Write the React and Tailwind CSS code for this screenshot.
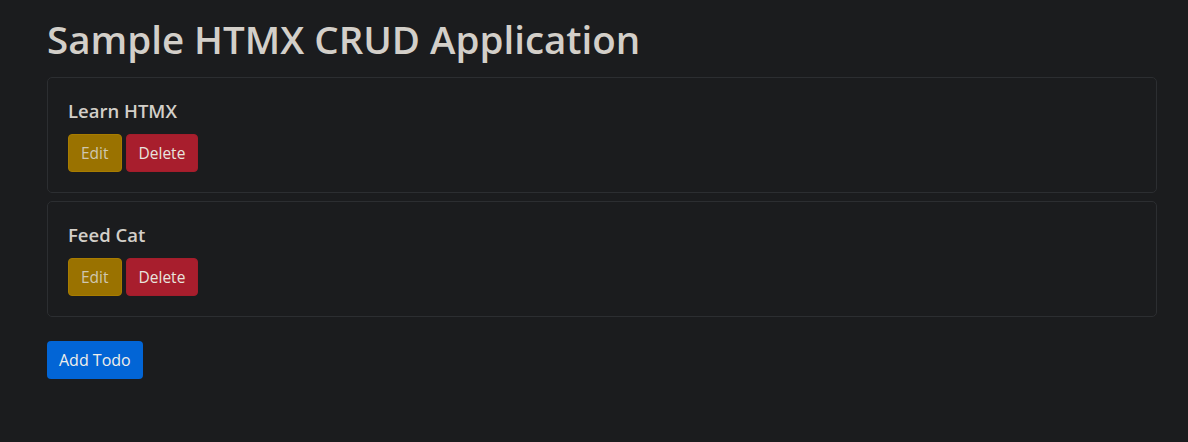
import React from 'react';

const todos = [
  { id: 1, title: 'Learn HTMX' },
  { id: 2, title: 'Feed Cat' },
];

const TodoCard = ({ title }) => (
  <div className="mb-2 rounded-[5px] border border-[#2c2e31] bg-[#1b1c1e] p-5">
    <h5 className="mb-3 pt-[2px] text-[18.5px] font-semibold leading-[22px] text-[#d3cfc9]">{title}</h5>
    <div className="flex gap-1">
      <button
        type="button"
        className="h-[38px] rounded-[4px] border border-[#a87c00] bg-[#9a7200] px-3 pt-[1px] text-[15.5px] text-[#cfc7b0]"
      >
        Edit
      </button>
      <button
        type="button"
        className="h-[38px] rounded-[4px] border border-[#a41d2b] bg-[#a81e2d] px-3 pt-[1px] text-[15.5px] text-[#e8e4de]"
      >
        Delete
      </button>
    </div>
  </div>
);

export default function App() {
  return (
    <div
      className="min-h-[442px] bg-[#1b1c1e] pl-[47px] pr-[31px] pt-[15px]"
      style={{ fontFamily: '"Open Sans", "Noto Sans", sans-serif' }}
    >
      <h1 className="mb-[14px] text-[38.5px] font-semibold leading-[48px] text-[#d3cfc9]">Sample HTMX CRUD Application</h1>
      {todos.map((todo) => (
        <TodoCard key={todo.id} title={todo.title} />
      ))}
      <button
        type="button"
        className="mt-4 h-[38px] rounded-[4px] bg-[#0265d6] px-3 text-[16px] text-[#f0eeea]"
      >
        Add Todo
      </button>
    </div>
  );
}
